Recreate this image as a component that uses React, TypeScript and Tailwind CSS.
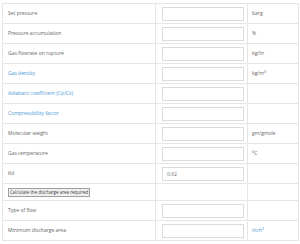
import React from 'react';

interface Row {
  label: string;
  blue?: boolean;
  input?: boolean;
  value?: string;
  unit?: React.ReactNode;
  unitBlue?: boolean;
}

const rows: Row[] = [
  { label: 'Set pressure', input: true, unit: 'barg' },
  { label: 'Pressure accumulation', input: true, unit: '%' },
  { label: 'Gas flowrate on rupture', input: true, unit: 'kg/hr' },
  { label: 'Gas density', blue: true, input: true, unit: <>kg/m<sup className="text-[4px]">3</sup></> },
  { label: 'Adiabatic coefficient (Cp/Cv)', blue: true, input: true },
  { label: 'Compressibility factor', blue: true, input: true },
  { label: 'Molecular weight', input: true, unit: 'gm/gmole' },
  { label: 'Gas temperature', input: true, unit: <><sup className="text-[4px]">0</sup>C</> },
  { label: 'Kd', input: true, value: '0.62' },
];

const tail: Row[] = [
  { label: 'Type of flow', input: true },
  { label: 'Minimum discharge area', input: true, unit: <>inch<sup className="text-[4px]">2</sup></>, unitBlue: true },
];

const cell = 'border border-[#e6e6e6] px-[5px] align-middle';

function FieldRow({ row }: { row: Row }) {
  return (
    <tr className="h-[20px]">
      <td className={`${cell} ${row.blue ? 'text-[#4a98d4]' : 'text-[#666]'}`}>{row.label}</td>
      <td className={`${cell} pl-[6px]`}>
        {row.input && (
          <input
            readOnly
            value={row.value ?? ''}
            className="block w-[82px] h-[14px] border border-[#dcdcdc] bg-white px-[4px] text-[5px] text-[#666] outline-none"
          />
        )}
      </td>
      <td className={`${cell} pl-[4px] ${row.unitBlue ? 'text-[#4a98d4]' : 'text-[#666]'}`}>{row.unit}</td>
    </tr>
  );
}

export default function App() {
  return (
    <div className="w-[300px] h-[244px] bg-white pt-[3px] px-[2px] font-['Open_Sans',sans-serif] text-[5px]">
      <table className="w-[296px] border-collapse table-fixed">
        <colgroup>
          <col className="w-[153px]" />
          <col className="w-[92px]" />
          <col className="w-[51px]" />
        </colgroup>
        <tbody>
          {rows.map((r) => (
            <FieldRow key={r.label} row={r} />
          ))}
          <tr className="h-[17px]">
            <td className={cell}>
              <button className="block h-[9px] px-[1px] border border-[#a0a0a0] bg-[#f0f0f0] text-[#444] text-[4.6px] tracking-[-0.05px] leading-none">
                Calculate the discharge area required
              </button>
            </td>
            <td className={cell}></td>
            <td className={cell}></td>
          </tr>
          {tail.map((r) => (
            <FieldRow key={r.label} row={r} />
          ))}
        </tbody>
      </table>
    </div>
  );
}
